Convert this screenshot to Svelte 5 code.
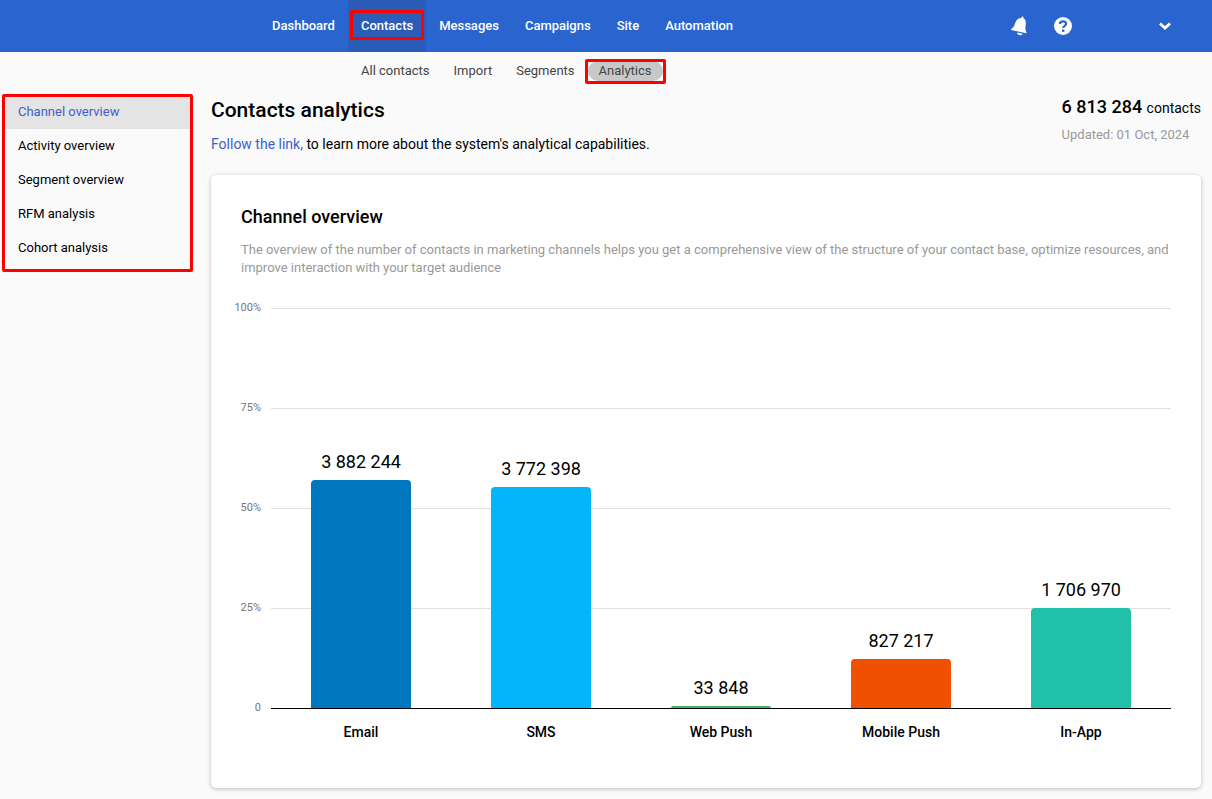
<script lang="ts">
  type Channel = { name: string; count: number; color: string };

  const total = 6813284;

  const sections = [
    "Dashboard",
    "Contacts",
    "Messages",
    "Campaigns",
    "Site",
    "Automation",
  ];
  const tabs = ["All contacts", "Import", "Segments", "Analytics"];
  const reports = [
    "Channel overview",
    "Activity overview",
    "Segment overview",
    "RFM analysis",
    "Cohort analysis",
  ];
  const ticks = ["100%", "75%", "50%", "25%", "0"];

  const channels: Channel[] = [
    { name: "Email", count: 3882244, color: "#0077bf" },
    { name: "SMS", count: 3772398, color: "#03b6f9" },
    { name: "Web Push", count: 33848, color: "#4caf60" },
    { name: "Mobile Push", count: 827217, color: "#f05100" },
    { name: "In-App", count: 1706970, color: "#21c0a8" },
  ];

  let section = $state("Contacts");
  let tab = $state("Analytics");
  let report = $state("Channel overview");

  function format(value: number) {
    return String(value).replace(/\B(?=(\d{3})+$)/g, " ");
  }

  function pick(event: MouseEvent, select: () => void) {
    event.preventDefault();
    select();
  }
</script>

<header>
  <nav class="sections" aria-label="Main">
    {#each sections as name}
      <a
        href="#{name}"
        class:active={section === name}
        onclick={(e) => pick(e, () => (section = name))}
      >
        {name}
      </a>
    {/each}
  </nav>

  <div class="tools">
    <button type="button" aria-label="Notifications">
      <svg width="18" height="20" viewBox="0 0 18 20" fill="#fff">
        <path
          d="M11.6 1.1c.2-1.1 2-.8 1.9.4l-.1.7c1.700.9 2.500 2.600 2.400 4.800l-.4 5.300c0 1.700.4 3 1.100 4l-.3.9L1.200 14l-.1-1c1.300-.6 2.200-1.500 2.900-2.900l1.900-4.600c.9-2.100 2.600-3.500 5.400-3.600z"
        />
        <path d="M7 16.500l5.800 1.200c-.6 1.200-1.800 1.700-3.200 1.400-1.500-.3-2.500-1.200-2.600-2.600z" />
      </svg>
    </button>
    <button type="button" aria-label="Help">
      <svg width="18" height="18" viewBox="0 0 18 18">
        <circle cx="9" cy="9" r="9" fill="#fff" />
        <path
          d="M6 6.900C6 5 7.200 4.300 9 4.300s3.100.9 3.100 2.500c0 2-2.900 2-2.900 4.200"
          fill="none"
          stroke="#2a65cf"
          stroke-width="2.200"
        />
        <rect x="8" y="12.500" width="2.400" height="2.400" fill="#2a65cf" />
      </svg>
    </button>
    <button type="button" class="account" aria-label="Account menu">
      <svg width="14" height="10" viewBox="0 0 14 10">
        <path d="M2 2.500l5 4.500 5-4.500" fill="none" stroke="#fff" stroke-width="2.800" />
      </svg>
    </button>
  </div>
</header>

<nav class="tabs" aria-label="Contacts">
  {#each tabs as name}
    <a
      href="#{name}"
      class:active={tab === name}
      onclick={(e) => pick(e, () => (tab = name))}
    >
      {name}
    </a>
  {/each}
</nav>

<div class="page">
  <nav class="reports" aria-label="Reports">
    {#each reports as name}
      <a
        href="#{name}"
        class:active={report === name}
        onclick={(e) => pick(e, () => (report = name))}
      >
        {name}
      </a>
    {/each}
  </nav>

  <main>
    <div class="intro">
      <div>
        <h1>Contacts analytics</h1>
        <p><a href="#docs">Follow the link,</a> to learn more about the system's analytical capabilities.</p>
      </div>
      <div class="total">
        <div><strong>{format(total)}</strong> contacts</div>
        <div class="updated">Updated: 01 Oct, 2024</div>
      </div>
    </div>

    <section class="card">
      <div class="heading">
        <h2>Channel overview</h2>
        <p>
          The overview of the number of contacts in marketing channels helps you get a
          comprehensive view of the structure of your contact base, optimize resources, and
          improve interaction with your target audience
        </p>
      </div>

      <div class="chart">
        <div class="ticks">
          {#each ticks as tick}
            <span>{tick}</span>
          {/each}
        </div>
        <div class="plot">
          <div class="lines">
            <i></i><i></i><i></i><i></i>
          </div>
          <div class="bars">
            {#each channels as { count, color }}
              <div class="column">
                <span>{format(count)}</span>
                <div class="bar" style="height: {(count / total) * 100}%; background: {color}"></div>
              </div>
            {/each}
          </div>
        </div>
        <div class="names">
          {#each channels as { name }}
            <span>{name}</span>
          {/each}
        </div>
      </div>
    </section>
  </main>
</div>

<style>
  :global(body) {
    background: #fafafa;
    color: #000;
    font-family: Roboto, "Liberation Sans", sans-serif;
    font-size: 13px;
  }

  a {
    color: inherit;
    text-decoration: none;
  }

  h1,
  h2,
  p {
    margin: 0;
  }

  header {
    display: flex;
    justify-content: space-between;
    height: 52px;
    padding: 0 32px 0 259px;
    background: #2a65cf;
    color: #fff;
  }

  .sections {
    display: flex;
    font-weight: 500;
    line-height: 51px;
  }

  .sections a {
    position: relative;
    padding: 0 13px;
  }

  .sections .active {
    background: #2a5cb8;
  }

  /* red frames drawn over the selected navigation */
  .sections .active::after,
  .tabs .active::after,
  .reports::after {
    content: "";
    position: absolute;
    border: 3px solid #f00;
    border-radius: 2px;
    pointer-events: none;
  }

  .sections .active::after {
    inset: 10px 2px 12px;
  }

  .tools {
    display: flex;
    align-items: center;
  }

  button {
    display: flex;
    margin: 0 0 0 26px;
    padding: 0;
    background: none;
    border: 0;
    cursor: pointer;
  }

  .tools .account {
    margin: 0 8px 0 86px;
  }

  .tabs {
    display: flex;
    gap: 2px;
    padding: 9px 0 13px 350px;
    color: #444;
    line-height: 20px;
  }

  .tabs a {
    position: relative;
    padding: 0 11px;
    border-radius: 10px;
  }

  .tabs .active {
    background: #c8c8c8;
  }

  .tabs .active::after {
    inset: -2px -3px -3px;
  }

  .page {
    display: flex;
    gap: 21px;
    padding: 0 11px 11px 0;
  }

  .reports {
    position: relative;
    flex: none;
    align-self: flex-start;
    width: 185px;
    margin-left: 5px;
    padding: 1px 0 7px;
    line-height: 34px;
  }

  .reports a {
    display: block;
    padding: 0 13px;
  }

  .reports .active {
    background: #e4e4e4;
    color: #3a60d0;
  }

  .reports::after {
    inset: 0 -3px 0 -3px;
  }

  main {
    flex: 1;
    min-width: 0;
  }

  .intro {
    display: flex;
    justify-content: space-between;
    padding-bottom: 21px;
    font-size: 14px;
    line-height: 20px;
  }

  h1 {
    margin: 4px 0 12px;
    font-size: 21px;
    font-weight: 500;
    line-height: 24px;
  }

  .intro a {
    color: #3a60d0;
  }

  .total {
    padding-top: 1px;
    line-height: 24px;
    white-space: nowrap;
  }

  .total strong {
    margin-right: 1px;
    font-size: 18px;
    font-weight: 500;
  }

  .updated {
    margin-top: 3px;
    color: #999;
    font-size: 13px;
  }

  .card {
    padding: 30px 0 44px;
    background: #fff;
    border-radius: 5px;
    box-shadow: 0 1px 4px rgba(0, 0, 0, 0.25);
  }

  .heading {
    padding: 0 30px;
  }

  h2 {
    margin-bottom: 12px;
    font-size: 18px;
    font-weight: 500;
    line-height: 24px;
  }

  .heading p {
    color: #999;
    line-height: 18px;
  }

  .chart {
    display: grid;
    grid-template-columns: 30px 1fr;
    column-gap: 10px;
    margin-top: 31px;
    padding: 0 30px 0 20px;
  }

  .ticks {
    display: flex;
    flex-direction: column;
    justify-content: space-between;
    margin: -7px 0 -6px;
    color: #777;
    font-size: 11px;
    line-height: 14px;
    text-align: right;
  }

  .plot {
    display: grid;
    height: 400px;
    border-bottom: 1px solid #000;
  }

  .lines,
  .bars {
    display: grid;
    grid-area: 1 / 1;
  }

  .lines i {
    border-top: 1px solid #e0e0e0;
  }

  .bars,
  .names {
    display: grid;
    grid-template-columns: repeat(5, 1fr);
    text-align: center;
  }

  .column {
    display: flex;
    flex-direction: column;
    align-items: center;
    justify-content: flex-end;
    height: 400px;
    font-size: 18px;
    line-height: 24px;
  }

  .column span {
    margin-bottom: 6px;
  }

  .bar {
    width: 100px;
    border-radius: 4px 4px 0 0;
  }

  .names {
    grid-column: 2;
    margin-top: 11px;
    font-size: 14px;
    font-weight: 500;
    line-height: 24px;
  }
</style>
